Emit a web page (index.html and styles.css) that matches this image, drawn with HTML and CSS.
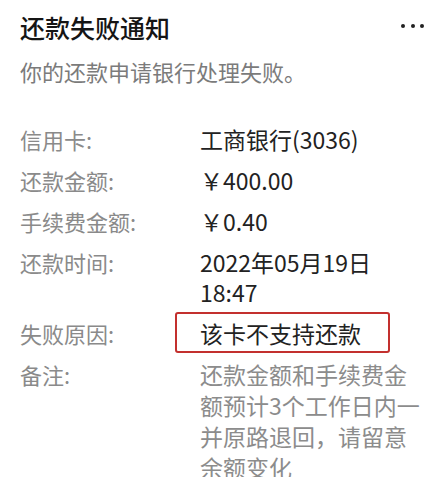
FILE: index.html
```html
<!DOCTYPE html>
<html lang="zh-CN">
<head>
<meta charset="utf-8">
<title>还款失败通知</title>
<link rel="stylesheet" href="styles.css">
</head>
<body>
<div class="card">
  <div class="header">
    <h1 class="title">还款失败通知</h1>
    <div class="more"><span></span><span></span><span></span></div>
  </div>
  <p class="subtitle">你的还款申请银行处理失败。</p>
  <div class="details">
    <div class="label">信用卡:</div>
    <div class="value">工商银行(3036)</div>
    <div class="label">还款金额:</div>
    <div class="value">￥400.00</div>
    <div class="label">手续费金额:</div>
    <div class="value">￥0.40</div>
    <div class="label">还款时间:</div>
    <div class="value">2022年05月19日 18:47</div>
    <div class="label">失败原因:</div>
    <div class="value highlighted">该卡不支持还款</div>
    <div class="label">备注:</div>
    <div class="value note">还款金额和手续费金额预计3个工作日内一并原路退回，请留意余额变化</div>
  </div>
</div>
</body>
</html>
```
FILE: styles.css
```css
html, body {
  margin: 0;
  padding: 0;
  background: #ffffff;
}
body {
  font-family: "Noto Sans CJK SC", "Noto Sans", sans-serif;
  overflow: hidden;
}
.card {
  padding: 12px 0 0 20px;
}
.header {
  display: flex;
  align-items: center;
  justify-content: space-between;
  padding-right: 15px;
}
.title {
  margin: 0;
  font-size: 25px;
  line-height: 30px;
  font-weight: 500;
  color: #151515;
}
.more {
  display: flex;
  gap: 5.5px;
  padding-bottom: 2px;
}
.more span {
  width: 4px;
  height: 4px;
  border-radius: 50%;
  background: #222;
}
.subtitle {
  margin: 14px 0 0;
  font-size: 22px;
  line-height: 30px;
  color: #7b7b7b;
}
.details {
  display: grid;
  grid-template-columns: 180px 224px;
  row-gap: 11px;
  margin-top: 38px;
}
.label {
  font-size: 22px;
  line-height: 30px;
  color: #8a8a8a;
}
.value {
  font-size: 23px;
  line-height: 30px;
  color: #222;
}
.highlighted {
  position: relative;
}
.highlighted::before {
  content: "";
  position: absolute;
  left: -25px;
  top: -6px;
  width: 211px;
  height: 37px;
  border: 2px solid #c3302e;
  border-radius: 3px;
}
.note {
  color: #8c8c8c;
  line-height: 31px;
}
```
